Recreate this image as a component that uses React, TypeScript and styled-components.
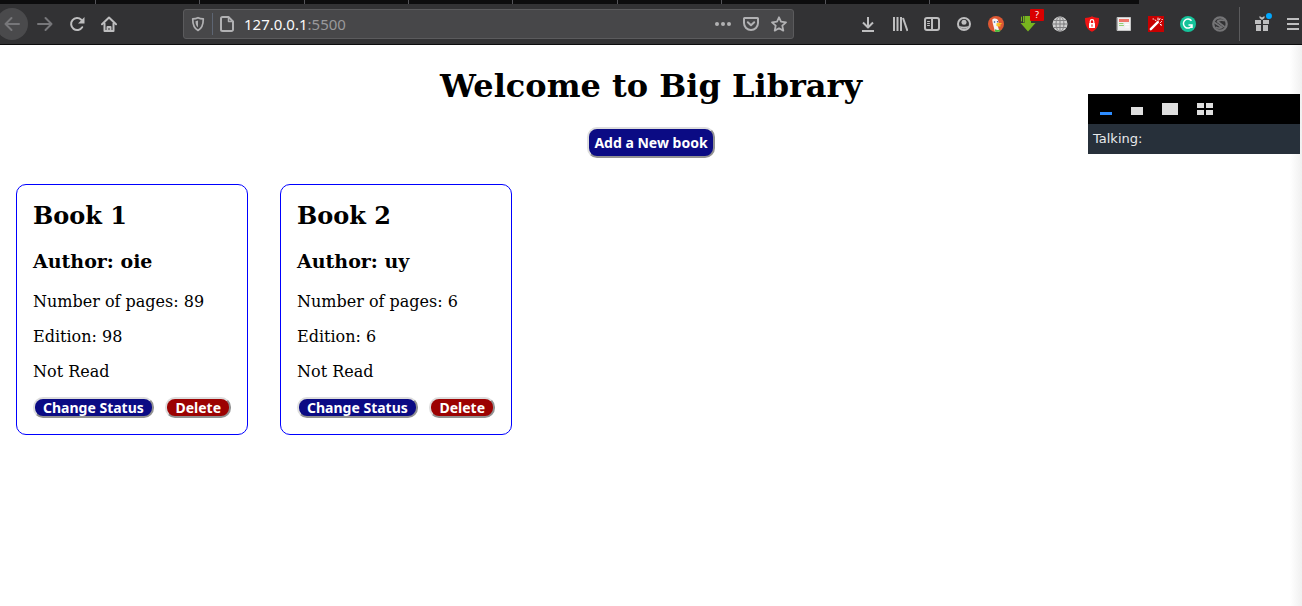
import React from "react";
import styled, { createGlobalStyle } from "styled-components";

const GlobalStyle = createGlobalStyle`
  * { box-sizing: border-box; }
  body {
    margin: 0;
    background: #fff;
    color: #000;
    font-family: "DejaVu Serif", serif;
    font-size: 16px;
    line-height: 19px;
  }
`;

const Screen = styled.div`
  position: relative;
  display: flex;
  flex-direction: column;
  min-height: 100vh;
  overflow: hidden;
`;

const TabStrip = styled.div`
  display: grid;
  grid-template-columns: 96px repeat(10, 1fr) 163px;
  height: 4px;
  background: #0c0c0d;
`;

const Tab = styled.div<{ $divided?: boolean; $active?: boolean }>`
  border-right: ${(p) => (p.$divided ? "1px solid #55555a" : "none")};
  background: ${(p) => (p.$active ? "#323234" : "transparent")};
`;

const Toolbar = styled.header`
  display: flex;
  align-items: center;
  gap: 58px;
  height: 41px;
  background: #323234;
  border-bottom: 1px solid #0c0c0d;
`;

const ToolGroup = styled.div`
  display: flex;
  align-items: center;
  flex: none;
`;

const NavGroup = styled(ToolGroup)`
  margin-left: -4px;
`;

const ToolButton = styled.button<{ $round?: boolean; $dim?: boolean }>`
  position: relative;
  display: flex;
  align-items: center;
  justify-content: center;
  width: 32px;
  height: 32px;
  margin: 0 ${(p) => (p.$round ? "1px" : "0")} 0 0;
  padding: 0;
  border: none;
  border-radius: ${(p) => (p.$round ? "50%" : "2px")};
  background: ${(p) => (p.$round ? "#4a4a4c" : "transparent")};
  color: ${(p) => (p.$dim ? "#77777a" : "#bebebf")};
`;

const MenuButton = styled(ToolButton)`
  width: 24px;
  justify-content: flex-end;
  padding-right: 2px;
`;

const Divider = styled.span`
  width: 1px;
  height: 34px;
  margin: 0 6px 0 3px;
  background: #5b5b5d;
`;

const Badge = styled.span`
  position: absolute;
  top: 1px;
  right: 0;
  width: 14px;
  height: 12px;
  border-radius: 1px;
  background: #d90000;
  color: #fff;
  font: 9px/12px "Noto Sans", sans-serif;
  text-align: center;
`;

const AddressBar = styled.div`
  display: flex;
  align-items: center;
  flex: 1;
  min-width: 0;
  height: 30px;
  padding: 0 6px;
  border: 1px solid #5b5b5d;
  border-radius: 3px;
  background: #474749;
  color: #b1b1b3;
`;

const AddressIcon = styled.button`
  display: flex;
  flex: none;
  padding: 0;
  border: none;
  background: none;
  color: inherit;
`;

const AddressDivider = styled.span`
  width: 1px;
  height: 22px;
  margin: 0 6px;
  background: #5d6573;
`;

const Address = styled.a`
  flex: 1;
  margin-left: 9px;
  color: #f9f9fa;
  font: 15px/20px "Noto Sans", sans-serif;
  text-decoration: none;
`;

const Port = styled.span`
  color: #99999b;
`;

const AddressActions = styled.div`
  display: flex;
  gap: 12px;
`;

const Page = styled.main`
  position: relative;
  flex: 1;
  padding-top: 22px;
`;

const EdgeShade = styled.div`
  position: absolute;
  top: 0;
  right: 0;
  bottom: 0;
  width: 12px;
  background: linear-gradient(to right, #fff, #f0f0f0);
`;

const Title = styled.h1`
  margin: 0 0 22px;
  font-size: 32px;
  line-height: 38px;
  text-align: center;
`;

const ActionButton = styled.button<{ $tone?: "danger"; $large?: boolean }>`
  height: ${(p) => (p.$large ? "31px" : "21px")};
  padding: 0 ${(p) => (p.$large ? "5px" : "8px")};
  border: 2px solid;
  border-color: #dedede #929292 #929292 #dedede;
  border-radius: 10px;
  background: ${(p) => (p.$tone === "danger" ? "#9c0202" : "#0b0b84")};
  color: #fff;
  font: bold 14px/17px "Noto Sans", sans-serif;
  white-space: nowrap;
`;

const AddRow = styled.div`
  display: flex;
  justify-content: center;
`;

const Shelf = styled.section`
  display: flex;
  flex-wrap: wrap;
  gap: 32px;
  padding: 26px 16px 16px;
`;

const Card = styled.article`
  display: flex;
  flex-direction: column;
  gap: 16px;
  width: 232px;
  padding: 16px;
  border: 1px solid #00f;
  border-radius: 10px;
`;

const BookTitle = styled.h2`
  margin: 0 0 3px;
  font-size: 24px;
  line-height: 30px;
`;

const Author = styled.h3`
  margin: 0 0 4px;
  font-size: 19px;
  line-height: 22px;
`;

const Detail = styled.p`
  margin: 0;
`;

const CardActions = styled.div`
  display: flex;
  justify-content: space-between;
`;

const CallPanel = styled.aside`
  position: absolute;
  top: 94px;
  right: 2px;
  width: 212px;
  background: #27303a;
`;

const CallViews = styled.div`
  display: flex;
  align-items: center;
  height: 30px;
  padding-left: 12px;
  background: #000;
`;

const ViewButton = styled.button`
  display: flex;
  margin-right: 18px;
  padding: 0;
  border: none;
  background: none;
  color: #dedede;
`;

const Talking = styled.p`
  margin: 0;
  padding-left: 5px;
  color: #e8eaec;
  font: 13px/30px "DejaVu Sans", sans-serif;
`;

const GiftDot = styled.span`
  position: absolute;
  top: 5px;
  right: 6px;
  width: 6px;
  height: 6px;
  border-radius: 50%;
  background: #00a8ff;
`;

const Icon = ({ children, width = 16 }: { children: React.ReactNode; width?: number }) => (
  <svg
    width={width}
    height="16"
    viewBox={`0 0 ${width} 16`}
    fill="none"
    stroke="currentColor"
    strokeWidth="2"
    strokeLinecap="round"
    strokeLinejoin="round"
    aria-hidden="true"
  >
    {children}
  </svg>
);

const icons = {
  back: <Icon><path d="M15 8H1.5M7.5 2L1.5 8l6 6" /></Icon>,
  forward: <Icon><path d="M1 8h13.5M8.5 2l6 6-6 6" /></Icon>,
  reload: (
    <Icon>
      <path d="M13.2 11.2A6 6 0 1 1 12.3 3.7" />
      <path d="M15.5 1v6.5H9z" fill="currentColor" stroke="none" />
    </Icon>
  ),
  home: (
    <Icon>
      <path d="M1 8.2L8 1.5l7 6.7" />
      <path d="M3.5 7.5V15h9V7.5M6.5 15v-4h3v4" />
    </Icon>
  ),
  shield: (
    <Icon>
      <path d="M8 1.7c1.8.9 3.6 1.1 5.3 1.1 0 6-1.3 9.7-5.3 11.6C4 12.5 2.7 8.8 2.7 2.8c1.7 0 3.5-.2 5.3-1.1z" strokeWidth="1.7" />
      <path d="M8 4.6v6.7C6.2 9.9 5.5 7.9 5.5 5.2z" fill="currentColor" stroke="none" />
    </Icon>
  ),
  page: (
    <Icon>
      <path d="M3.5 1h6L14 5.5v8a1.5 1.5 0 0 1-1.5 1.5h-9A1.5 1.5 0 0 1 2 13.5v-11A1.5 1.5 0 0 1 3.5 1z" />
      <path d="M9.5 1.5v4h4" strokeWidth="1.5" />
    </Icon>
  ),
  more: (
    <Icon>
      <g fill="currentColor" stroke="none">
        <circle cx="2" cy="8" r="2" />
        <circle cx="8" cy="8" r="2" />
        <circle cx="14" cy="8" r="2" />
      </g>
    </Icon>
  ),
  pocket: (
    <Icon>
      <path d="M1.5 2h13a.5.5 0 0 1 .5.5V7A7 7 0 0 1 1 7V2.5a.5.5 0 0 1 .5-.5z" />
      <path d="M4.8 6.2L8 9.2l3.2-3" />
    </Icon>
  ),
  star: (
    <Icon>
      <path d="M8 1.3l2 4.4 5 .6-3.7 3.3 1 5L8 12.200l-4.300 2.400 1-5L1 6.300l5-.6z" strokeWidth="1.8" />
    </Icon>
  ),
  download: <Icon><path d="M8 1v10M3 6.5l5 5 5-5M2 15h12" strokeLinecap="butt" /></Icon>,
  library: <Icon><path d="M2 1v14M5.500 1v14M9 1v14M11 2l4.5 13" strokeLinecap="butt" /></Icon>,
  sidebar: (
    <Icon>
      <rect x="1" y="2" width="14" height="12" rx="2" />
      <path d="M8 2v12" strokeLinecap="butt" />
      <path d="M3.5 5.5h2M3.5 7.5h2M3.5 9.5h2" strokeWidth="1" />
    </Icon>
  ),
  account: (
    <Icon>
      <circle cx="8" cy="8" r="6" />
      <circle cx="8" cy="6.3" r="2.5" fill="currentColor" stroke="none" />
      <path d="M3 10c3 1 7 1 10 0a5.8 5.8 0 0 1-10 0z" fill="currentColor" stroke="none" />
    </Icon>
  ),
  duck: (
    <Icon>
      <g stroke="none">
        <circle cx="8" cy="8" r="8" fill="#de5833" />
        <path d="M4.2 3.8C5.5 1.9 9.5 2 10.3 5l.4 3-1 2 1.8 5.2A8 8 0 0 1 7 15.8L4.7 7z" fill="#f5f5f5" />
        <path d="M8.5 7.3c2-.3 4-.4 5.5.2-.8.9-2 1.2-3.3 1.3.9.5 1.8.6 2.4 1.1-1.7.8-4 .6-4.8-.2z" fill="#fdc52a" />
        <path d="M7 13.2l2.7.7 2.6-.5v1.9c-1.6.7-3.500.9-5.300.4z" fill="#4cba3c" />
        <circle cx="6.5" cy="6" r=".8" fill="#2d4f8e" />
        <circle cx="9.5" cy="5.7" r=".7" fill="#2d4f8e" />
      </g>
    </Icon>
  ),
  greenArrow: (
    <Icon>
      <path d="M4.5 0H11v7h4.5L8 15.5.5 7h4z" fill="#78b51e" stroke="none" />
      <path d="M1.500 1v4M3.500 0v6" stroke="#78b51e" strokeWidth="1" />
    </Icon>
  ),
  globe: (
    <Icon>
      <circle cx="8" cy="8" r="7.5" fill="#d0d0d0" stroke="none" />
      <g stroke="#808082" strokeWidth="1">
        <path d="M.8 8h14.4M2 4.5h12M2 11.5h12M8 .5v15" />
        <ellipse cx="8" cy="8" rx="4" ry="7.5" />
      </g>
    </Icon>
  ),
  redShield: (
    <Icon>
      <path d="M8 .3c2 1.3 4.5 1.7 7 1.7 0 6.5-1.3 11-7 13.8C2.3 13 1 8.5 1 2 3.5 2 6 1.6 8 .3z" fill="#f01414" stroke="none" />
      <rect x="5" y="7" width="6" height="5" rx=".5" fill="#fff" stroke="none" />
      <path d="M6.2 7V5.500a1.8 1.8 0 0 1 3.6 0V7" stroke="#fff" strokeWidth="1.2" />
      <path d="M8 8.8v1.5" stroke="#e00" strokeWidth="1" />
    </Icon>
  ),
  news: (
    <Icon>
      <rect x="1.5" y="1.5" width="13" height="13" fill="#efefef" stroke="#c6c6c6" strokeWidth="1" />
      <path d="M3 4.500h10" stroke="#ef7468" strokeWidth="3" strokeLinecap="butt" />
      <path d="M3.5 7.5H7M3.5 9.5h4" stroke="#94cf75" strokeWidth="1" />
      <path d="M9.5 8.5H13M9.5 11H13" stroke="#fff" strokeWidth="1" />
    </Icon>
  ),
  wand: (
    <Icon>
      <rect width="16" height="16" fill="#c80000" stroke="none" />
      <path d="M2.8 13.2l7-7" stroke="#fff" strokeWidth="2.4" />
      <path d="M10 2v2M13.5 5.5l-1 1M12 2.5L11 4M13 9h.5M7 4l1 .5M5 3h.5M14 3.5h.3M12 8l1 1" stroke="#fff" strokeWidth="1" />
    </Icon>
  ),
  grammar: (
    <Icon>
      <circle cx="8" cy="8" r="8" fill="#15c39a" stroke="none" />
      <path d="M11.5 4.8A4.5 4.5 0 1 0 12 9.5M8.5 9H12v3" stroke="#fff" strokeWidth="1.5" strokeLinecap="butt" strokeLinejoin="miter" />
    </Icon>
  ),
  blocked: (
    <Icon>
      <g stroke="#747476">
        <circle cx="8" cy="8" r="6.7" strokeWidth="2.3" />
        <path d="M12 4.5C10 4 6 4 5.5 5.500L12 10.500" strokeWidth="1.8" />
        <path d="M2.500 6.500l7.500 5c-2 1-4 .8-5.500 0" strokeWidth="1.8" />
      </g>
    </Icon>
  ),
  gift: (
    <Icon>
      <path d="M1 4h6v4H1zM9 4h6v4H9zM2 9h5v6H2zM9 9h5v6H9zM5.500 0L8 1.500 10.500 0v2L8 4 5.500 2z" fill="currentColor" stroke="none" />
    </Icon>
  ),
  menu: <Icon width={14}><path d="M1 3h12M1 8h12M1 13h12" strokeLinecap="butt" /></Icon>,
};

const extensions: { label: string; icon: React.ReactNode; badge?: string }[] = [
  { label: "Downloads", icon: icons.download },
  { label: "Library", icon: icons.library },
  { label: "Sidebars", icon: icons.sidebar },
  { label: "Account", icon: icons.account },
  { label: "Private search", icon: icons.duck },
  { label: "Download helper", icon: icons.greenArrow, badge: "?" },
  { label: "Web", icon: icons.globe },
  { label: "Protection", icon: icons.redShield },
  { label: "News", icon: icons.news },
  { label: "Magic wand", icon: icons.wand },
  { label: "Writing assistant", icon: icons.grammar },
  { label: "Blocked", icon: icons.blocked },
];

const callViews = [
  { label: "Minimize", width: 12, shape: <path d="M0 11h12v3H0z" fill="#2d8cff" /> },
  { label: "Small view", width: 14, shape: <path d="M1 6h12v8H1z" fill="currentColor" /> },
  { label: "Large view", width: 16, shape: <path d="M0 2h16v12H0z" fill="currentColor" /> },
  { label: "Gallery", width: 18, shape: <path d="M1 2h7v5H1zM10 2h7v5h-7zM1 9h7v5H1zM10 9h7v5h-7z" fill="currentColor" /> },
];

const books = [
  { title: "Book 1", author: "oie", pages: 89, edition: 98, status: "Not Read" },
  { title: "Book 2", author: "uy", pages: 6, edition: 6, status: "Not Read" },
];

export default function App() {
  return (
    <Screen>
      <GlobalStyle />
      <TabStrip>
        {Array.from({ length: 12 }, (_, i) => (
          <Tab key={i} $divided={i < 9} $active={i === 11} />
        ))}
      </TabStrip>
      <Toolbar>
        <NavGroup>
          <ToolButton $round $dim aria-label="Back">{icons.back}</ToolButton>
          <ToolButton $dim aria-label="Forward">{icons.forward}</ToolButton>
          <ToolButton aria-label="Reload">{icons.reload}</ToolButton>
          <ToolButton aria-label="Home">{icons.home}</ToolButton>
        </NavGroup>
        <AddressBar>
          <AddressIcon aria-label="Tracking protection">{icons.shield}</AddressIcon>
          <AddressDivider />
          <AddressIcon aria-label="Site information">{icons.page}</AddressIcon>
          <Address href="#">127.0.0.1<Port>:5500</Port></Address>
          <AddressActions>
            <AddressIcon aria-label="Page actions">{icons.more}</AddressIcon>
            <AddressIcon aria-label="Save to Pocket">{icons.pocket}</AddressIcon>
            <AddressIcon aria-label="Bookmark">{icons.star}</AddressIcon>
          </AddressActions>
        </AddressBar>
        <ToolGroup>
          {extensions.map((e) => (
            <ToolButton key={e.label} aria-label={e.label}>
              {e.icon}
              {e.badge && <Badge>{e.badge}</Badge>}
            </ToolButton>
          ))}
          <Divider />
          <ToolButton aria-label="What's new">{icons.gift}<GiftDot /></ToolButton>
          <MenuButton aria-label="Menu">{icons.menu}</MenuButton>
        </ToolGroup>
      </Toolbar>
      <Page>
        <EdgeShade />
        <Title>Welcome to Big Library</Title>
        <AddRow>
          <ActionButton $large>Add a New book</ActionButton>
        </AddRow>
        <Shelf>
          {books.map((b) => (
            <Card key={b.title}>
              <BookTitle>{b.title}</BookTitle>
              <Author>Author: {b.author}</Author>
              <Detail>Number of pages: {b.pages}</Detail>
              <Detail>Edition: {b.edition}</Detail>
              <Detail>{b.status}</Detail>
              <CardActions>
                <ActionButton>Change Status</ActionButton>
                <ActionButton $tone="danger">Delete</ActionButton>
              </CardActions>
            </Card>
          ))}
        </Shelf>
      </Page>
      <CallPanel>
        <CallViews>
          {callViews.map((v) => (
            <ViewButton key={v.label} aria-label={v.label}>
              <svg width={v.width} height="16" viewBox={`0 0 ${v.width} 16`} aria-hidden="true">{v.shape}</svg>
            </ViewButton>
          ))}
        </CallViews>
        <Talking>Talking:</Talking>
      </CallPanel>
    </Screen>
  );
}
